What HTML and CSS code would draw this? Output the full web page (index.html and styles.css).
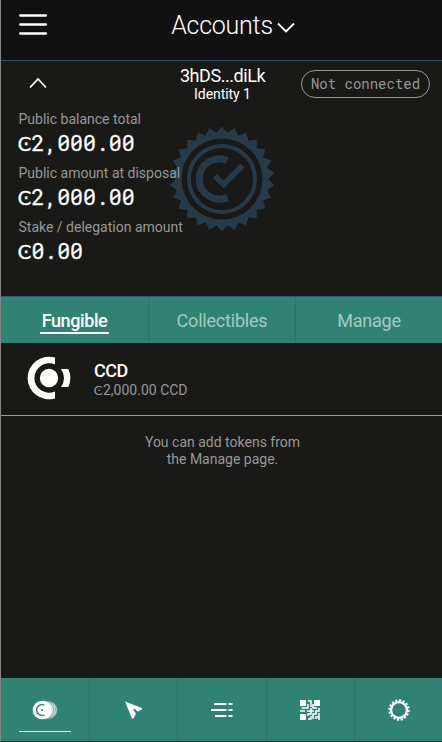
FILE: index.html
```html
<!DOCTYPE html>
<html lang="en">
<head>
<meta charset="utf-8">
<title>Accounts</title>
<link rel="stylesheet" href="styles.css">
</head>
<body>
<div class="wallet">
  <header class="top">
    <svg class="menu" width="30" height="22" viewBox="0 0 30 22"><path d="M2.2 1.5H28M2.2 10.5H28M2.2 19.5H28"/></svg>
    <h1>Accounts<svg width="18" height="12" viewBox="0 0 18 12"><path d="M1 1.5L9 9.5L17 1.5"/></svg></h1>
  </header>
  <section class="account">
    <svg class="seal" width="106" height="106" viewBox="-53 -53 106 106">
      <polygon id="rim"/>
      <circle class="gap" r="40.5"/>
      <circle class="ring" r="33"/>
      <path class="c" d="M5.5 -18.2A20 20 0 1 0 5.5 18.2"/>
      <path class="check" d="M-7 -3L1.5 5.5L20.5 -13.5"/>
    </svg>
    <div class="account-head">
      <svg class="collapse" width="18" height="12" viewBox="0 0 18 12"><path d="M1 10.5L9 2L17 10.5"/></svg>
      <div class="identity"><div class="address">3hDS...diLk</div><div class="id-name">Identity 1</div></div>
      <div class="status">Not connected</div>
    </div>
    <dl class="balances">
      <dt>Public balance total</dt><dd><span class="ccd">Ͼ</span>2,000.00</dd>
      <dt>Public amount at disposal</dt><dd><span class="ccd">Ͼ</span>2,000.00</dd>
      <dt>Stake / delegation amount</dt><dd><span class="ccd">Ͼ</span>0.00</dd>
    </dl>
  </section>
  <nav class="tabs">
    <a class="active"><span>Fungible</span></a><a><span>Collectibles</span></a><a><span>Manage</span></a>
  </nav>
  <section class="token">
    <svg width="44" height="44" viewBox="-22 -22 44 44">
      <circle r="9.2"/>
      <path d="M6 -20.4A21.3 21.3 0 1 0 6 20.4V13.6A14.8 14.8 0 1 1 6 -13.6Z"/>
      <path d="M12 -9H19.3A21.3 21.3 0 0 1 19.3 9H12A15 15 0 0 0 12 -9Z"/>
    </svg>
    <div><div class="token-name">CCD</div><div class="token-amount"><span class="ccd">Ͼ</span>2,000.00 CCD</div></div>
  </section>
  <p class="hint">You can add tokens from<br>the Manage page.</p>
  <nav class="bottom">
    <a class="active"><svg width="28" height="22" viewBox="0 0 28 22">
      <g class="coins"><circle cx="17.5" cy="11" r="8.6"/><circle cx="15.7" cy="11" r="8.8"/><circle cx="13.7" cy="11" r="9"/></g><circle class="coin" cx="11" cy="11" r="9.3"/><path class="coin-c" d="M13.5 6.2A5.4 5.4 0 1 0 13.5 15.8"/><circle class="coin-dot" cx="11" cy="11" r="1"/></svg></a>
    <a><svg width="20" height="20" viewBox="0 0 20 20"><path class="fill" d="M1 1.5L18 8V9.5L13.5 11.5L10.5 8.5L9.2 9.7L12 13.5L9.5 18.5H8Z"/></svg></a>
    <a><svg width="24" height="16" viewBox="0 0 24 16"><path class="line" d="M4 2H16.5M18.5 2H22.5M1 8H16.5M18.5 8H22.5M5 14H16.5M18.5 14H22.5"/></svg></a>
    <a><svg width="20" height="20" viewBox="0 0 20 20"><path class="fill" d="M0 0H6V6H0ZM14 0H20V6H14ZM0 14H6V20H0Z"/><path class="qr" d="M8 1H11V7M8 4V8H1.5M0 11H5M7 11H11V8M13 4V8H17M14 11H11V14H8V16M19 8V11H16V14H13V19M8 19H11V16M16 19V17H19V13M19 20V17"/></svg></a>
    <a><svg width="24" height="24" viewBox="-12 -12 24 24"><circle class="gear-teeth" r="9.3" pathLength="32"/><circle class="gear" r="7.9"/></svg></a>
  </nav>
</div>
<script src="seal.js"></script>
</body>
</html>
```
FILE: styles.css
```css
* { box-sizing: border-box; }
body { margin: 0; background: #191917; color: #fff; font-family: Roboto, sans-serif; }
svg { display: block; fill: none; stroke: #fff; stroke-width: 1.8; }
.wallet { width: 442px; height: 742px; border-left: 1px solid #858585; border-bottom: 1px solid #222c2a; display: flex; flex-direction: column; }
.top { height: 61px; background: #111; border-bottom: 1px solid #2b5570; position: relative; flex: none; }
.menu { position: absolute; left: 17px; top: 14px; stroke-width: 2.3; stroke-linecap: round; }
h1 { margin: 0; padding: 9px 0 0 23px; font-size: 25px; line-height: 34px; font-weight: 300; letter-spacing: -.25px; display: flex; justify-content: center; align-items: center; gap: 4px; }
h1 svg { margin-top: 4px; }
.account { height: 235px; position: relative; flex: none; }
.account-head { height: 47px; display: grid; grid-template-columns: 1fr 130px 1fr; }
.collapse { margin: 16px 0 0 28px; }
.identity { text-align: center; padding: 5px 0 0 2px; }
.address { font-size: 18px; line-height: 20px; letter-spacing: -.45px; }
.id-name { font-size: 14px; line-height: 16px; letter-spacing: -.05px; }
.status { justify-self: end; margin: 9px 12px 0 0; width: 129px; height: 28px; border: 1px solid #989896; border-radius: 14px; color: #969694; font: 14px/26px "Roboto Mono", "DejaVu Sans Mono", monospace; text-align: center; white-space: nowrap; }
.balances { margin: 0; padding: 2px 0 0 17.5px; }
dt { color: #989896; font-size: 14px; line-height: 18px; height: 19px; }
dd { margin: 0; height: 35px; font: 400 21.5px/27px "Roboto Mono", "DejaVu Sans Mono", monospace; -webkit-text-stroke: .3px #fff; }
.ccd { display: inline-block; font-family: "DejaVu Sans", sans-serif; font-size: 13px; line-height: 1; width: 9px; text-indent: -.5px; }
dd .ccd { font-size: 20px; width: 12.9px; text-indent: -1px; }
.seal { position: absolute; left: 168px; top: 65px; fill: #263d4c; stroke: none; opacity: .95; }
.seal .gap { fill: #191917; }
.seal .ring, .seal .c, .seal .check { fill: none; stroke: #263d4c; }
.seal .ring { stroke-width: 4; }
.seal .c { stroke-width: 7; }
.seal .check { stroke-width: 5.5; }
.account-head, .balances { position: relative; z-index: 1; }
.tabs { display: grid; grid-template-columns: repeat(3, 1fr); height: 47px; background: #308274; border-top: 1px solid #315e70; flex: none; }
.tabs a { text-align: center; color: #a5cbc1; font-size: 18px; line-height: 24px; padding-top: 12px; border-left: 1px solid #2b7568; letter-spacing: -.2px; }
.tabs a:first-child, .bottom a:first-child { border-left: 0; }
.tabs span { display: inline-block; height: 26px; }
.tabs .active { color: #fff; font-weight: 500; }
.tabs .active span { height: 25px; padding: 0 2px; border-bottom: 2px solid #fff; letter-spacing: -.4px; }
.token { height: 73px; border-bottom: 1px solid #989896; display: flex; gap: 23px; padding: 13px 0 0 26px; flex: none; }
.token svg { fill: #fff; stroke: none; }
.token-name { font-size: 18px; line-height: 21px; font-weight: 500; padding-top: 4px; letter-spacing: -.5px; }
.token-amount { font-size: 14px; line-height: 19px; color: #989896; }
.hint { margin: 18px 0 0; padding-left: 2px; text-align: center; color: #989896; font-size: 14px; line-height: 17px; }
.bottom { margin-top: auto; height: 63px; display: grid; grid-template-columns: repeat(5, 1fr); background: #308274; flex: none; }
.bottom a { display: flex; align-items: center; justify-content: center; border-left: 1px solid #2b7568; position: relative; }
.bottom .active::after { content: ""; position: absolute; left: 18px; right: 18px; bottom: 9px; height: 1px; background: #fff; }
.bottom a:last-child { padding-left: 2px; }
.fill { fill: #fff; stroke: none; }
.line { stroke-width: 1.9; }
.qr { stroke-width: 1.5; }
.coins { fill: #dce8e8; stroke: #779fae; stroke-width: .8; }
.coin { fill: #fff; stroke: none; }
.coin-c { stroke: #467d9c; stroke-width: 1.5; }
.coin-dot { fill: #467d9c; stroke: none; }
.gear { stroke-width: 2.2; }
.gear-teeth { stroke-width: 2.8; stroke-dasharray: 1.1 .9; }
```
FILE: seal.js
```js
const teeth = 26;
const points = [];
for (let i = 0; i < teeth * 2; i++) {
  const r = i % 2 ? 46.5 : 52.5;
  const a = Math.PI * i / teeth - Math.PI / 2;
  points.push((r * Math.cos(a)).toFixed(2) + "," + (r * Math.sin(a)).toFixed(2));
}
document.getElementById("rim").setAttribute("points", points.join(" "));
```
